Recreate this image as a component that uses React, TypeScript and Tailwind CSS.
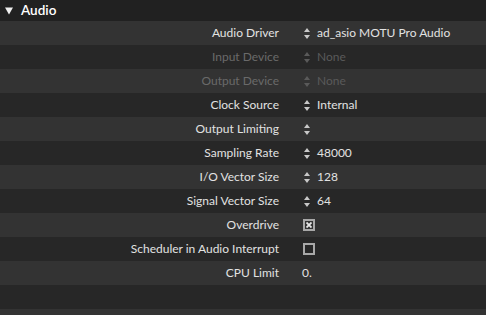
import { Fragment } from 'react'

type Row = {
  label: string
  kind: 'menu' | 'check' | 'text' | 'empty'
  value?: string
  checked?: boolean
  disabled?: boolean
}

const rows: Row[] = [
  { label: 'Audio Driver', kind: 'menu', value: 'ad_asio MOTU Pro Audio' },
  { label: 'Input Device', kind: 'menu', value: 'None', disabled: true },
  { label: 'Output Device', kind: 'menu', value: 'None', disabled: true },
  { label: 'Clock Source', kind: 'menu', value: 'Internal' },
  { label: 'Output Limiting', kind: 'menu', value: '' },
  { label: 'Sampling Rate', kind: 'menu', value: '48000' },
  { label: 'I/O Vector Size', kind: 'menu', value: '128' },
  { label: 'Signal Vector Size', kind: 'menu', value: '64' },
  { label: 'Overdrive', kind: 'check', checked: true },
  { label: 'Scheduler in Audio Interrupt', kind: 'check', checked: false },
  { label: 'CPU Limit', kind: 'text', value: '0.' },
  { label: '', kind: 'empty' },
  { label: '', kind: 'empty' },
]

function UpDown({ dim }: { dim?: boolean }) {
  return (
    <svg width="8" height="13" viewBox="0 0 8 13" className={dim ? 'text-[#5a5a5a]' : 'text-[#c8c8c8]'}>
      <path d="M4 1 L7 5 L1 5 Z" fill="currentColor" />
      <path d="M4 12 L7 8 L1 8 Z" fill="currentColor" />
    </svg>
  )
}

function Check({ on }: { on?: boolean }) {
  return (
    <div className="w-[12px] h-[12px] border-2 border-[#a8a8a8] flex items-center justify-center">
      {on && (
        <svg width="6" height="6" viewBox="0 0 6 6">
          <path d="M0.5 0.5 L5.5 5.5 M5.5 0.5 L0.5 5.5" stroke="#e8e8e8" strokeWidth="1.8" />
        </svg>
      )}
    </div>
  )
}

export default function App() {
  return (
    <div
      className="w-[486px] h-[315px] overflow-hidden bg-[#222222] text-[12px] text-[#e2e2e2]"
      style={{ fontFamily: 'Lato, "Open Sans", sans-serif' }}
    >
      {/* section header */}
      <div className="h-[21px] flex items-center gap-[8px] pl-[5px] bg-[#212121]">
        <svg width="8" height="8" viewBox="0 0 8 8">
          <path d="M0 0.5 L8 0.5 L4 7.5 Z" fill="#f0f0f0" />
        </svg>
        <span className="text-[13.5px] font-semibold text-white">Audio</span>
      </div>

      {rows.map((r, i) => (
        <div
          key={i}
          className={`h-[24px] grid grid-cols-[279px_1fr] items-center ${i % 2 === 0 ? 'bg-[#333333]' : 'bg-[#272727]'}`}
        >
          <div className={`text-right ${r.disabled ? 'text-[#6a6a6a]' : ''}`}>{r.label}</div>
          <div className="flex items-center pl-[24px]">
            {r.kind === 'menu' && (
              <Fragment>
                <UpDown dim={r.disabled} />
                <span className={`ml-[6px] ${r.disabled ? 'text-[#5a5a5a]' : ''}`}>{r.value}</span>
              </Fragment>
            )}
            {r.kind === 'check' && <Check on={r.checked} />}
            {r.kind === 'text' && <span className="-ml-[1px]">{r.value}</span>}
          </div>
        </div>
      ))}
    </div>
  )
}
